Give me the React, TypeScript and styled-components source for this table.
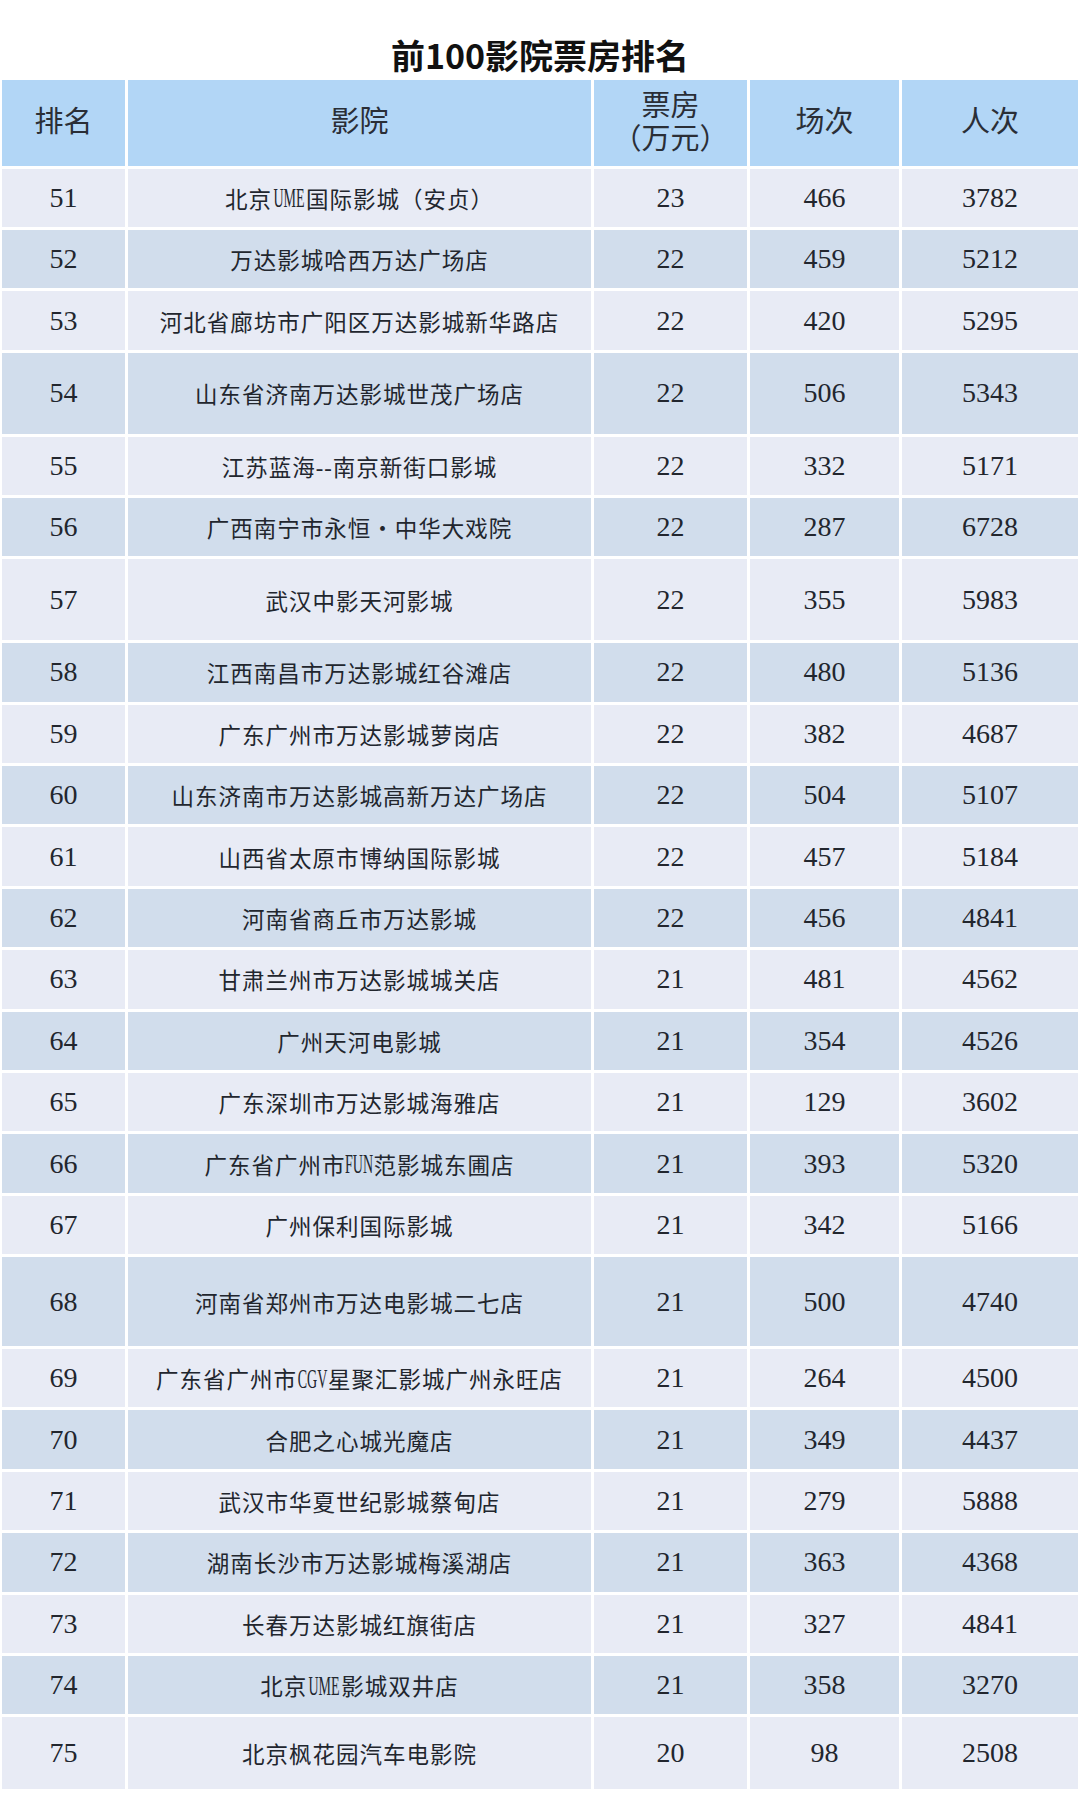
import styled, { createGlobalStyle } from 'styled-components'

type Row = { rank: number; name: string; box: number; shows: number; people: number; h?: number }

const rows: Row[] = [
  { rank: 51, name: '北京UME国际影城（安贞）', box: 23, shows: 466, people: 3782 },
  { rank: 52, name: '万达影城哈西万达广场店', box: 22, shows: 459, people: 5212 },
  { rank: 53, name: '河北省廊坊市广阳区万达影城新华路店', box: 22, shows: 420, people: 5295 },
  { rank: 54, name: '山东省济南万达影城世茂广场店', box: 22, shows: 506, people: 5343, h: 80.8 },
  { rank: 55, name: '江苏蓝海--南京新街口影城', box: 22, shows: 332, people: 5171 },
  { rank: 56, name: '广西南宁市永恒・中华大戏院', box: 22, shows: 287, people: 6728 },
  { rank: 57, name: '武汉中影天河影城', box: 22, shows: 355, people: 5983, h: 80.8 },
  { rank: 58, name: '江西南昌市万达影城红谷滩店', box: 22, shows: 480, people: 5136 },
  { rank: 59, name: '广东广州市万达影城萝岗店', box: 22, shows: 382, people: 4687 },
  { rank: 60, name: '山东济南市万达影城高新万达广场店', box: 22, shows: 504, people: 5107 },
  { rank: 61, name: '山西省太原市博纳国际影城', box: 22, shows: 457, people: 5184 },
  { rank: 62, name: '河南省商丘市万达影城', box: 22, shows: 456, people: 4841 },
  { rank: 63, name: '甘肃兰州市万达影城城关店', box: 21, shows: 481, people: 4562 },
  { rank: 64, name: '广州天河电影城', box: 21, shows: 354, people: 4526 },
  { rank: 65, name: '广东深圳市万达影城海雅店', box: 21, shows: 129, people: 3602 },
  { rank: 66, name: '广东省广州市FUN范影城东圃店', box: 21, shows: 393, people: 5320 },
  { rank: 67, name: '广州保利国际影城', box: 21, shows: 342, people: 5166 },
  { rank: 68, name: '河南省郑州市万达电影城二七店', box: 21, shows: 500, people: 4740, h: 88.8 },
  { rank: 69, name: '广东省广州市CGV星聚汇影城广州永旺店', box: 21, shows: 264, people: 4500 },
  { rank: 70, name: '合肥之心城光魔店', box: 21, shows: 349, people: 4437 },
  { rank: 71, name: '武汉市华夏世纪影城蔡甸店', box: 21, shows: 279, people: 5888 },
  { rank: 72, name: '湖南长沙市万达影城梅溪湖店', box: 21, shows: 363, people: 4368 },
  { rank: 73, name: '长春万达影城红旗街店', box: 21, shows: 327, people: 4841 },
  { rank: 74, name: '北京UME影城双井店', box: 21, shows: 358, people: 3270 },
  { rank: 75, name: '北京枫花园汽车电影院', box: 20, shows: 98, people: 2508, h: 72 }
]

// latin runs inside the names are squeezed, like the narrow half-width letters of the original
const splitName = (name: string) =>
  name.split(/([A-Z]+)/).map((part, i) => (/^[A-Z]+$/.test(part) ? <S.Latin key={i}>{part}</S.Latin> : part))

const GlobalStyle = createGlobalStyle`
  body {
    margin: 0;
    background: #ffffff;
  }
`

export default function App() {
  return (
    <S.Page>
      <GlobalStyle />
      <S.Title>前100影院票房排名</S.Title>
      <S.Table>
        <S.Grid h={85.4}>
          <S.Head>排名</S.Head>
          <S.Head>影院</S.Head>
          <S.Head>
            <span>票房</span>
            <span>（万元）</span>
          </S.Head>
          <S.Head>场次</S.Head>
          <S.Head>人次</S.Head>
        </S.Grid>
        {rows.map((r, i) => (
          <S.Grid key={r.rank} h={r.h ?? 58.4}>
            <S.Cell alt={i % 2 === 1}>{r.rank}</S.Cell>
            <S.Cell alt={i % 2 === 1} cjk>
              {splitName(r.name)}
            </S.Cell>
            <S.Cell alt={i % 2 === 1}>{r.box}</S.Cell>
            <S.Cell alt={i % 2 === 1}>{r.shows}</S.Cell>
            <S.Cell alt={i % 2 === 1}>{r.people}</S.Cell>
          </S.Grid>
        ))}
      </S.Table>
    </S.Page>
  )
}

const S = {
  Page: styled.div`
    width: 1080px;
    height: 1800px;
    background: #ffffff;
    overflow: hidden;
  `,
  Title: styled.div`
    height: 80.3px;
    box-sizing: border-box;
    display: flex;
    align-items: flex-end;
    justify-content: center;
    padding-bottom: 7px;
    font-family: 'Noto Sans CJK SC', 'Noto Sans', sans-serif;
    font-weight: 700;
    font-size: 34px;
    line-height: 36px;
    color: #111111;
  `,
  Table: styled.div`
    display: flex;
    flex-direction: column;
    gap: 3px;
    padding: 0 2px;
  `,
  Grid: styled.div<{ h: number }>`
    display: grid;
    grid-template-columns: 123px 463px 153px 149px 176px;
    column-gap: 3px;
    height: ${(p) => p.h}px;
  `,
  Head: styled.div`
    background: #b2d6f6;
    display: flex;
    flex-direction: column;
    align-items: center;
    justify-content: center;
    font-family: 'Liberation Serif', 'Noto Sans CJK SC', serif;
    font-size: 29px;
    line-height: 33px;
    color: #2a2e36;
  `,
  Cell: styled.div<{ alt: boolean; cjk?: boolean }>`
    background: ${(p) => (p.alt ? '#d1ddec' : '#e8ebf5')};
    display: flex;
    align-items: center;
    justify-content: center;
    font-family: 'Liberation Serif', 'Noto Sans CJK SC', serif;
    font-size: ${(p) => (p.cjk ? '22.5px' : '28px')};
    letter-spacing: ${(p) => (p.cjk ? '1px' : '0')};
    color: #22262e;
    white-space: nowrap;
  `,
  Latin: styled.span`
    display: inline-block;
    font-size: 27px;
    line-height: 1;
    letter-spacing: 0;
    transform: translateY(1px) scaleX(0.52);
    margin: 0 -0.48em;
  `
}
